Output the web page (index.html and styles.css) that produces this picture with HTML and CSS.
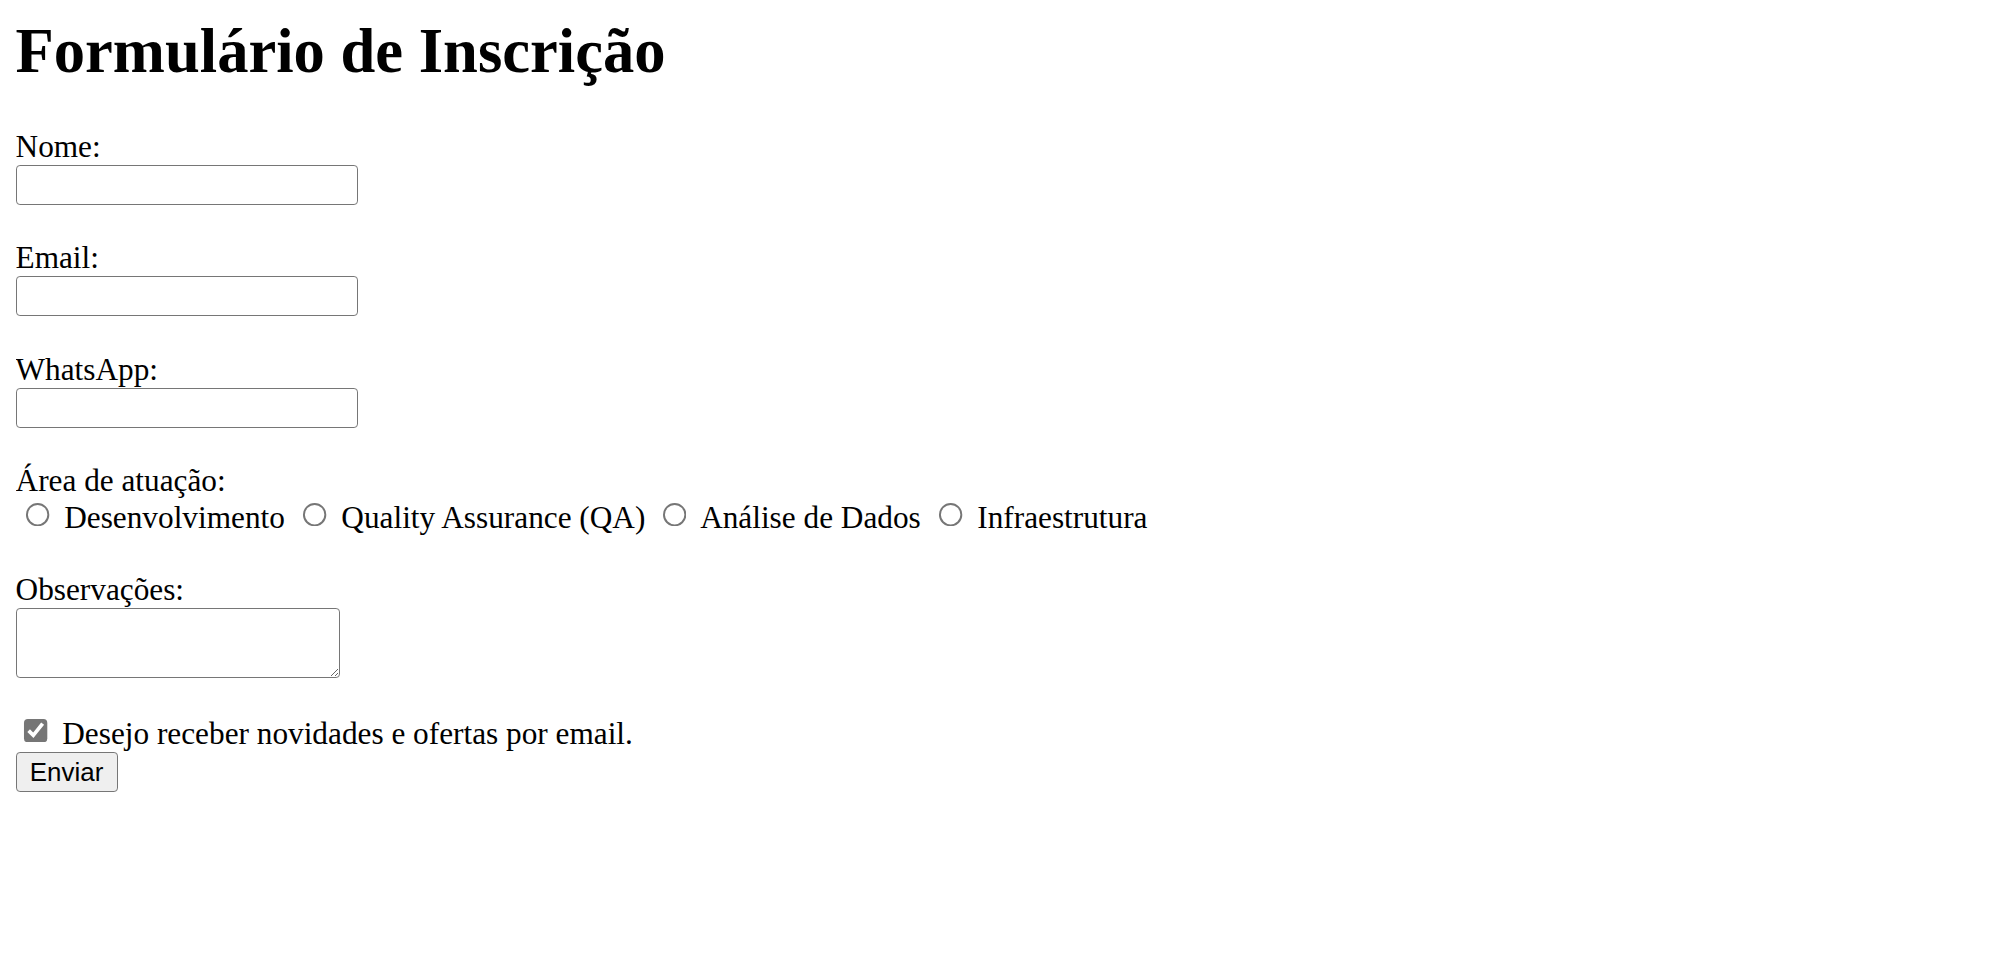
FILE: index.html
```html
<!DOCTYPE html>
<html lang="pt-BR">
<head>
<meta charset="utf-8">
<title>Formulário de Inscrição</title>
<link rel="stylesheet" href="styles.css">
</head>
<body class="page">
<h1 class="title">Formulário de Inscrição</h1>
<form class="form">
<label class="lbl" for="nome">Nome:</label><br>
<input class="field" type="text" id="nome" name="nome"><br><br>
<label class="lbl" for="email">Email:</label><br>
<input class="field" type="email" id="email" name="email"><br><br>
<label class="lbl" for="whatsapp">WhatsApp:</label><br>
<input class="field" type="tel" id="whatsapp" name="whatsapp"><br><br>
<label class="lbl">Área de atuação:</label><br>
<input class="radio" type="radio" id="dev" name="area" value="dev"> <label class="lbl" for="dev">Desenvolvimento</label>
<input class="radio" type="radio" id="qa" name="area" value="qa"> <label class="lbl" for="qa">Quality Assurance (QA)</label>
<input class="radio" type="radio" id="dados" name="area" value="dados"> <label class="lbl" for="dados">Análise de Dados</label>
<input class="radio" type="radio" id="infra" name="area" value="infra"> <label class="lbl" for="infra">Infraestrutura</label><br><br>
<label class="lbl" for="obs">Observações:</label><br>
<textarea class="notes" id="obs" name="obs"></textarea><br><br>
<input class="check" type="checkbox" id="news" name="news" checked> <label class="lbl" for="news">Desejo receber novidades e ofertas por email.</label><br>
<button class="submit" type="submit">Enviar</button>
</form>
</body>
</html>
```

FILE: styles.css
```css
html {
  zoom: 1.944;
}

.page {
  margin: 8px;
  font-family: "Liberation Serif", "Times New Roman", serif;
  font-size: 16.1px;
  line-height: 18.4px;
  color: #000;
  background: #fff;
}

.title {
  font-size: 32.2px;
  line-height: 36.8px;
  font-weight: bold;
  margin: 0 0 21.44px 0;
}

.form {
  margin: 0;
}

.field {
  box-sizing: border-box;
  width: 176px;
  height: 20.6px;
  margin: 0;
  padding: 1px 2px;
  border: 1px solid #767676;
  border-radius: 2px;
  background: #fff;
  font-family: "Liberation Sans", Arial, sans-serif;
  font-size: 13.333px;
  line-height: normal;
  vertical-align: baseline;
}

.radio {
  margin: 2px 3px 0 5px;
  width: 13px;
  height: 13px;
}

.check {
  margin: 3px 3px 3px 4px;
  width: 13px;
  height: 13px;
  accent-color: #767676;
}

.notes {
  box-sizing: border-box;
  width: 167px;
  height: 36px;
  margin: 0;
  padding: 2px;
  border: 1px solid #767676;
  border-radius: 2px;
  font-family: "Liberation Mono", monospace;
  font-size: 13.333px;
  line-height: normal;
  resize: both;
  vertical-align: top;
}

.submit {
  box-sizing: border-box;
  width: 52.5px;
  height: 20.6px;
  margin: 0;
  padding: 1px 6px;
  border: 1px solid #767676;
  border-radius: 2px;
  background: #efefef;
  color: #000;
  font-family: "Liberation Sans", Arial, sans-serif;
  font-size: 13.333px;
  line-height: normal;
}
```
